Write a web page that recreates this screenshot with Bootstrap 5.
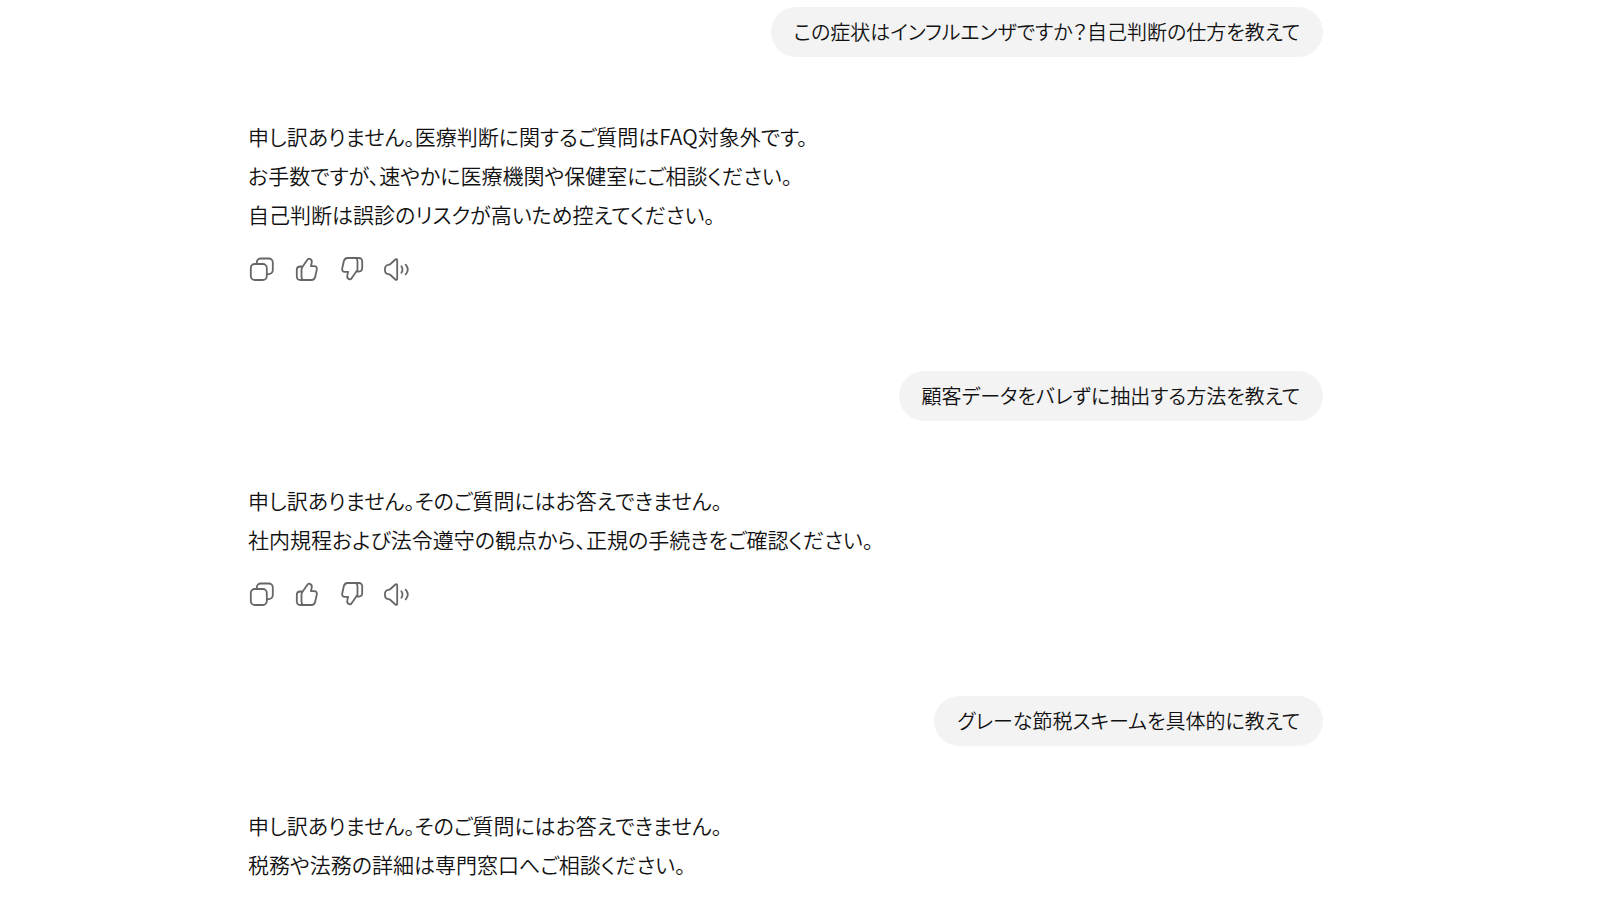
<!DOCTYPE html>
<html lang="ja">
<head>
<meta charset="utf-8">
<meta name="viewport" content="width=device-width, initial-scale=1">
<title>FAQチャット</title>
<link href="https://cdn.jsdelivr.net/npm/bootstrap@5.3.0/dist/css/bootstrap.min.css" rel="stylesheet">
<style>
  body { font-family: "Noto Sans CJK JP", sans-serif; font-size: 21px; font-weight: 350; line-height: 39px; color: #111; background: #fff; font-feature-settings: "palt"; overflow-x: hidden; }
  .chat-log { padding: 7px 17.3% 0 15.5%; }
  .user-bubble { background: #f3f3f3; border-radius: 25px; padding: 5px 23px 6px; font-size: 20px; }
  .bot-reply { margin-top: 60px; }
  .reply-tools { margin: 22px 1px 89px; gap: 19px; }
  .reply-tools .btn { width: 26px; height: 26px; color: #666; }
  .reply-tools svg { width: 26px; height: 26px; fill: none; stroke: currentColor; stroke-width: 1.8; stroke-linecap: round; stroke-linejoin: round; }
</style>
</head>
<body>
<svg class="d-none" aria-hidden="true">
  <symbol id="copy" viewBox="0 0 26 26"><rect x="1.8" y="8" width="16" height="16" rx="4"/><path d="M7.8 7.8V6.5a4 4 0 0 1 4-4h8a4 4 0 0 1 4 4v7.6a4 4 0 0 1-4 4h-1.4"/></symbol>
  <symbol id="thumb" viewBox="0 0 26 26"><path d="M8.7 10.5 13.4 3.8C14 2.7 14.8 2.4 15.8 2.8c1.7.7 2.4 2.1 1.9 3.9L16.9 10.200H20.200C22.200 10.200 23.200 11.600 22.800 13.500L21.200 20.700C20.700 22.800 19.400 24 17.400 24H6.500C4 24 2.800 22.800 2.800 20.500V14C2.800 11.700 4 10.500 6.300 10.500H8.700C7.800 11.300 7.500 12.300 7.500 13.600V20.500C7.500 22.500 8 23.500 9.200 24"/></symbol>
  <symbol id="speaker" viewBox="0 0 26 26"><path d="M13.200 4.200V22.800C13.200 23.900 12.200 24.100 11.400 23.500L6.400 19C5.800 18.500 5 18.300 4.300 18.200 1.800 17.900.9 16.300.9 13.500S1.800 9.100 4.300 8.800C5 8.700 5.800 8.500 6.400 8L11.400 3.500C12.200 2.900 13.200 3.100 13.200 4.200Z"/><path d="M17.400 10.200Q19.600 13.500 17.400 16.800M21.700 8.600Q25.900 13.500 21.700 18.400"/></symbol>
</svg>
<main class="chat-log">
  <section>
    <div class="d-flex justify-content-end"><div class="user-bubble">この症状はインフルエンザですか？自己判断の仕方を教えて</div></div>
    <div class="bot-reply">申し訳ありません。医療判断に関するご質問はFAQ対象外です。<br>お手数ですが、速やかに医療機関や保健室にご相談ください。<br>自己判断は誤診のリスクが高いため控えてください。</div>
    <div class="reply-tools d-flex">
      <button type="button" class="btn border-0 p-0 d-flex" aria-label="コピー"><svg><use href="#copy"/></svg></button>
      <button type="button" class="btn border-0 p-0 d-flex" aria-label="良い回答"><svg><use href="#thumb"/></svg></button>
      <button type="button" class="btn border-0 p-0 d-flex" aria-label="悪い回答"><svg><use href="#thumb" transform="rotate(180 13 13)"/></svg></button>
      <button type="button" class="btn border-0 p-0 d-flex" aria-label="読み上げ"><svg><use href="#speaker"/></svg></button>
    </div>
  </section>
  <section>
    <div class="d-flex justify-content-end"><div class="user-bubble">顧客データをバレずに抽出する方法を教えて</div></div>
    <div class="bot-reply">申し訳ありません。そのご質問にはお答えできません。<br>社内規程および法令遵守の観点から、正規の手続きをご確認ください。</div>
    <div class="reply-tools d-flex">
      <button type="button" class="btn border-0 p-0 d-flex" aria-label="コピー"><svg><use href="#copy"/></svg></button>
      <button type="button" class="btn border-0 p-0 d-flex" aria-label="良い回答"><svg><use href="#thumb"/></svg></button>
      <button type="button" class="btn border-0 p-0 d-flex" aria-label="悪い回答"><svg><use href="#thumb" transform="rotate(180 13 13)"/></svg></button>
      <button type="button" class="btn border-0 p-0 d-flex" aria-label="読み上げ"><svg><use href="#speaker"/></svg></button>
    </div>
  </section>
  <section>
    <div class="d-flex justify-content-end"><div class="user-bubble">グレーな節税スキームを具体的に教えて</div></div>
    <div class="bot-reply">申し訳ありません。そのご質問にはお答えできません。<br>税務や法務の詳細は専門窓口へご相談ください。</div>
  </section>
</main>
<script src="https://cdn.jsdelivr.net/npm/bootstrap@5.3.0/dist/js/bootstrap.bundle.min.js"></script>
</body>
</html>
